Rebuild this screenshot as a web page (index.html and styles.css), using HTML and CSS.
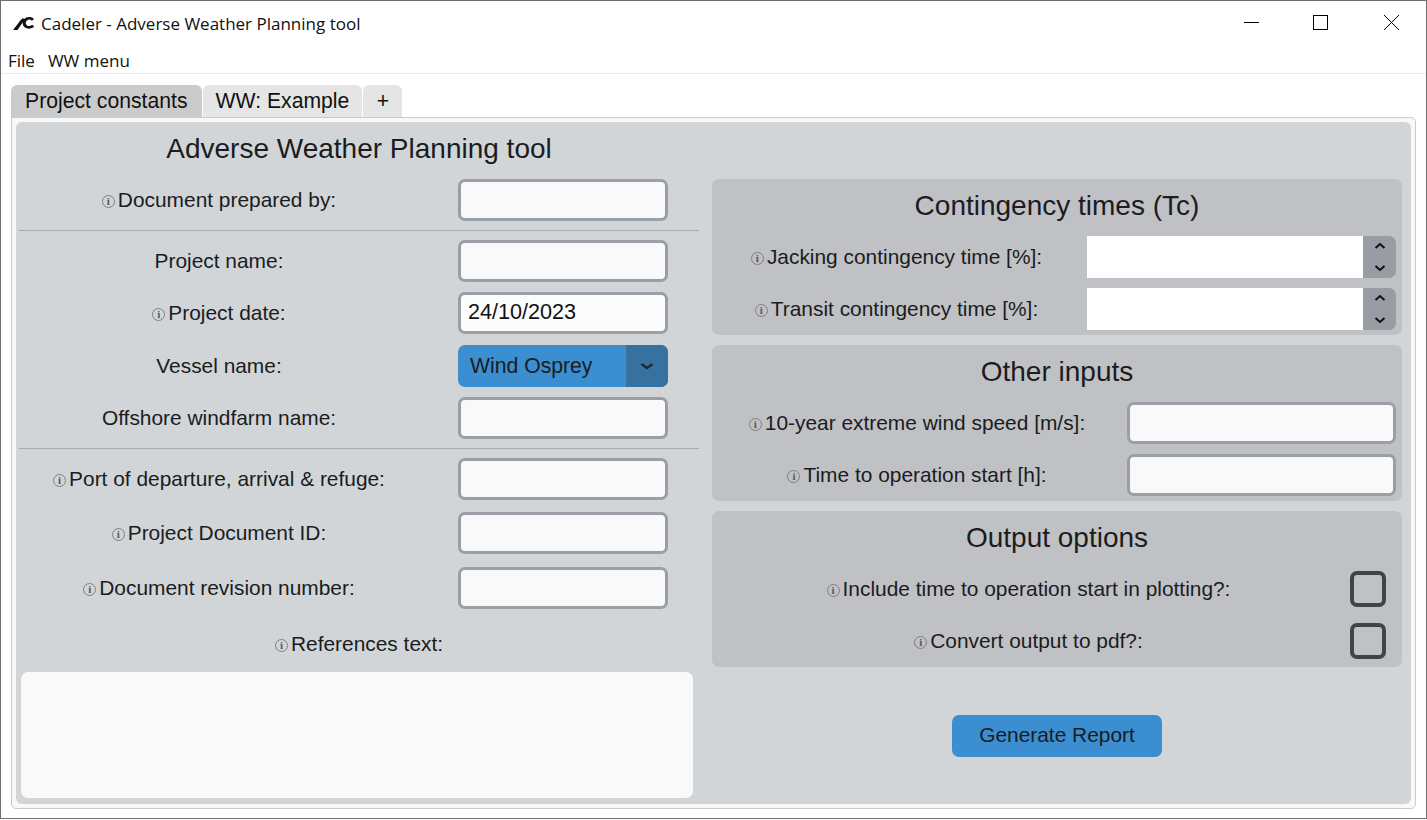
FILE: index.html
```html
<!DOCTYPE html>
<html lang="en">

<head>
    <meta charset="UTF-8">
    <meta name="viewport" content="width=device-width, initial-scale=1.0">
    <title>Cadeler - Adverse Weather Planning tool</title>
    <link rel="stylesheet" href="styles.css">
</head>

<body>
    <div class="window">
        <div class="titlebar">
            <svg class="logo" width="22" height="15" viewBox="0 0 22 15">
                <path d="M0 14 L4.5 14 C7.5 10 9 6.5 12 4 L10 2 C8 3.5 7 5 5.5 7 Z" fill="#111"/>
                <path d="M21 3 C18.5 0.4 13.5 0.4 11 3.2 C8.8 6 9.4 10 12.4 11.8 C15 13.2 18.8 12.8 21.2 10.8 L19.2 8.8 C17.2 10.4 15 10.4 13.8 9.2 C12.2 7.6 12.4 5.6 14 4.4 C15.6 3.2 17.4 3.4 19 4.8 Z" fill="#111"/>
            </svg>
            <span class="app-title">Cadeler - Adverse Weather Planning tool</span>
            <div class="win-controls">
                <div class="win-btn">
                    <svg width="16" height="16" viewBox="0 0 16 16"><path d="M1 7.5H16" stroke="#000" fill="none"/></svg>
                </div>
                <div class="win-btn">
                    <svg width="16" height="16" viewBox="0 0 16 16"><rect x="0.5" y="0.5" width="14" height="14" stroke="#000" fill="none"/></svg>
                </div>
                <div class="win-btn">
                    <svg width="16" height="16" viewBox="0 0 16 16"><path d="M1 0L16 15M16 0L1 15" stroke="#000" fill="none"/></svg>
                </div>
            </div>
        </div>
        <div class="menubar">
            <span>File</span>
            <span>WW menu</span>
        </div>
        <div class="tabs">
            <div class="tab tab-active">Project constants</div>
            <div class="tab tab-ww">WW: Example</div>
            <div class="tab tab-add">+</div>
        </div>
        <div class="tab-frame">
            <div class="panel">
                <div class="left-col">
                    <h1 class="main-title">Adverse Weather Planning tool</h1>

                    <div class="row">
                        <label class="row-label"><span class="info">i</span>Document prepared by:</label>
                        <input type="text" class="entry">
                    </div>
                    <div class="sep"></div>
                    <div class="row">
                        <label class="row-label">Project name:</label>
                        <input type="text" class="entry">
                    </div>
                    <div class="row">
                        <label class="row-label"><span class="info">i</span>Project date:</label>
                        <input type="text" class="entry entry-white" value="24/10/2023">
                    </div>
                    <div class="row">
                        <label class="row-label">Vessel name:</label>
                        <div class="select">
                            <span class="select-text">Wind Osprey</span>
                            <span class="select-arrow">
                                <svg width="14" height="8" viewBox="0 0 14 8"><path d="M1.5 2L7 6L12.5 2" stroke="#1d2a38" stroke-width="2.4" fill="none"/></svg>
                            </span>
                        </div>
                    </div>
                    <div class="row">
                        <label class="row-label">Offshore windfarm name:</label>
                        <input type="text" class="entry">
                    </div>
                    <div class="sep"></div>
                    <div class="row">
                        <label class="row-label"><span class="info">i</span>Port of departure, arrival &amp; refuge:</label>
                        <input type="text" class="entry">
                    </div>
                    <div class="row">
                        <label class="row-label"><span class="info">i</span>Project Document ID:</label>
                        <input type="text" class="entry">
                    </div>
                    <div class="row">
                        <label class="row-label"><span class="info">i</span>Document revision number:</label>
                        <input type="text" class="entry">
                    </div>
                    <div class="refs-label"><span class="info">i</span>References text:</div>
                    <textarea class="refs-text"></textarea>
                </div>

                <div class="right-col">
                    <section class="card">
                        <h2 class="card-title">Contingency times (Tc)</h2>
                        <div class="card-row">
                            <label class="card-label label-spin"><span class="info">i</span>Jacking contingency time [%]:</label>
                            <div class="spin">
                                <input type="text" class="spin-input">
                                <div class="spin-btns">
                                    <svg width="12" height="8" viewBox="0 0 12 8"><path d="M1.5 6L6 2L10.5 6" stroke="#111" stroke-width="2" fill="none"/></svg>
                                    <svg width="12" height="8" viewBox="0 0 12 8"><path d="M1.5 2L6 6L10.5 2" stroke="#111" stroke-width="2" fill="none"/></svg>
                                </div>
                            </div>
                        </div>
                        <div class="card-row">
                            <label class="card-label label-spin"><span class="info">i</span>Transit contingency time [%]:</label>
                            <div class="spin">
                                <input type="text" class="spin-input">
                                <div class="spin-btns">
                                    <svg width="12" height="8" viewBox="0 0 12 8"><path d="M1.5 6L6 2L10.5 6" stroke="#111" stroke-width="2" fill="none"/></svg>
                                    <svg width="12" height="8" viewBox="0 0 12 8"><path d="M1.5 2L6 6L10.5 2" stroke="#111" stroke-width="2" fill="none"/></svg>
                                </div>
                            </div>
                        </div>
                    </section>

                    <section class="card">
                        <h2 class="card-title">Other inputs</h2>
                        <div class="card-row">
                            <label class="card-label label-wide"><span class="info">i</span>10-year extreme wind speed [m/s]:</label>
                            <input type="text" class="entry entry-wide">
                        </div>
                        <div class="card-row">
                            <label class="card-label label-wide"><span class="info">i</span>Time to operation start [h]:</label>
                            <input type="text" class="entry entry-wide">
                        </div>
                    </section>

                    <section class="card">
                        <h2 class="card-title">Output options</h2>
                        <div class="card-row">
                            <label class="card-label label-check"><span class="info">i</span>Include time to operation start in plotting?:</label>
                            <span class="check"></span>
                        </div>
                        <div class="card-row">
                            <label class="card-label label-check"><span class="info">i</span>Convert output to pdf?:</label>
                            <span class="check"></span>
                        </div>
                    </section>

                    <div class="actions">
                        <button class="btn-generate">Generate Report</button>
                    </div>
                </div>
            </div>
        </div>
    </div>
</body>

</html>
```

FILE: styles.css
```css
* {
    box-sizing: border-box;
}

html,
body {
    margin: 0;
    height: 100%;
    background-color: #ffffff;
    overflow: hidden;
}

body {
    font-family: "Liberation Sans", Arial, sans-serif;
    font-size: 20.9px;
    color: #1a1c1e;
}

.window {
    height: 819px;
    border: 1px solid #6e6e6e;
    background-color: #ffffff;
    display: flex;
    flex-direction: column;
}

.titlebar {
    height: 47px;
    flex: none;
    display: flex;
    align-items: center;
    padding-left: 12px;
}

.logo {
    margin-right: 6px;
    margin-top: -3px;
}

.app-title {
    font-family: "Open Sans", sans-serif;
    font-size: 17px;
    color: #111;
    margin-top: -2px;
}

.win-controls {
    margin-left: auto;
    display: flex;
    align-self: flex-start;
}

.win-btn {
    width: 70px;
    height: 44px;
    display: flex;
    align-items: center;
    justify-content: center;
}

.menubar {
    height: 26px;
    flex: none;
    display: flex;
    gap: 13px;
    padding-left: 7px;
    padding-top: 1px;
    font-family: "Open Sans", sans-serif;
    font-size: 17px;
    color: #111;
    border-bottom: 1px solid #ececec;
}

.tabs {
    display: flex;
    gap: 1px;
    flex: none;
    height: 34px;
    margin-top: 10px;
    padding-left: 10px;
    padding-top: 1px;
}

.tab {
    background-color: #e5e5e5;
    border-radius: 6px 6px 0 0;
    padding: 0 14px;
    height: 33px;
    line-height: 32px;
    font-size: 21.2px;
    color: #111;
}

.tab-active {
    background-color: #cbcbcb;
}

.tab-ww {
    padding: 0 13px;
}

.tab-add {
    padding: 0;
    width: 39px;
    text-align: center;
}

.tab-frame {
    margin: -1px 10px 0 10px;
    height: 692px;
    flex: none;
    border: 1px solid #cbcbcb;
    border-radius: 0 5px 5px 5px;
    padding: 4px;
    background-color: #f8f8f8;
}

.panel {
    height: 682px;
    background-color: #d1d5d8;
    border-radius: 6px;
    display: grid;
    grid-template-columns: 696px 690px;
}

.left-col {
    padding-left: 3px;
    display: grid;
    grid-template-rows: 57px 42px 19px 52px 53px 52px 42px 19px 54px 55px 42px 63px 126px;
    align-content: start;
}

.main-title {
    margin: 0;
    width: 680px;
    text-align: center;
    font-size: 28px;
    font-weight: normal;
    line-height: 54px;
}

.row {
    display: grid;
    grid-template-columns: 400px 210px;
    column-gap: 39px;
    align-items: center;
    height: 42px;
}

.row-label {
    text-align: center;
}

.info {
    display: inline-block;
    width: 13px;
    height: 13px;
    margin-right: 3px;
    border: 1.4px solid #7d8083;
    border-radius: 50%;
    font-family: "Liberation Serif", serif;
    font-size: 11px;
    font-weight: bold;
    line-height: 10px;
    text-align: center;
    color: #55585b;
    vertical-align: 2px;
}

.sep {
    width: 680px;
    height: 10px;
    border-bottom: 1px solid #a9acaf;
}

.entry {
    width: 210px;
    height: 42px;
    border: 3px solid #9a9ea5;
    border-radius: 7px;
    background-color: #f9f9fa;
    padding: 0 7px 2px;
    font-family: "Liberation Sans", Arial, sans-serif;
    font-size: 21.6px;
    color: #111;
}

.entry-white {
    background-color: #fcfcfc;
}

.select {
    width: 210px;
    height: 42px;
    background-color: #3b8ed0;
    border-radius: 7px;
    display: flex;
    overflow: hidden;
}

.select-text {
    flex: 1;
    line-height: 42px;
    padding-left: 12px;
    font-size: 21.2px;
}

.select-arrow {
    width: 42px;
    background-color: #36719f;
    display: flex;
    align-items: center;
    justify-content: center;
}

.refs-label {
    width: 680px;
    padding-top: 23px;
    text-align: center;
    line-height: 23px;
}

.refs-text {
    width: 672px;
    height: 126px;
    margin-left: 2px;
    border: none;
    border-radius: 7px;
    background-color: #f9f9fa;
    resize: none;
}

.right-col {
    padding-top: 57px;
    display: flex;
    flex-direction: column;
    gap: 10px;
}

.card {
    height: 156px;
    background-color: #c0c1c4;
    border-radius: 7px;
}

.card-title {
    margin: 0;
    height: 57px;
    font-size: 28px;
    font-weight: normal;
    line-height: 53px;
    text-align: center;
}

.card-row {
    display: flex;
    align-items: center;
    height: 42px;
    margin-bottom: 10px;
}

.card-label {
    text-align: center;
}

.label-spin {
    width: 369px;
}

.label-wide {
    width: 410px;
}

.label-check {
    width: 633px;
}

.spin {
    width: 309px;
    height: 42px;
    margin-left: 6px;
    display: flex;
    border-radius: 0 7px 7px 0;
    overflow: hidden;
}

.spin-input {
    flex: 1;
    min-width: 0;
    border: none;
    background-color: #ffffff;
}

.spin-btns {
    width: 33px;
    background-color: #979da2;
    display: flex;
    flex-direction: column;
    align-items: center;
    justify-content: center;
    gap: 14px;
}

.entry-wide {
    width: 269px;
    height: 42px;
    margin-left: 5px;
}

.check {
    width: 36px;
    height: 36px;
    margin-left: 5px;
    border: 4px solid #3e4549;
    border-radius: 7px;
}

.actions {
    display: flex;
    justify-content: center;
    padding-top: 38px;
}

.btn-generate {
    width: 210px;
    height: 42px;
    border: none;
    border-radius: 7px;
    padding: 0 0 2px;
    background-color: #3b8ed0;
    font-family: "Liberation Sans", Arial, sans-serif;
    font-size: 20.9px;
    color: #1a1c1e;
}
```
